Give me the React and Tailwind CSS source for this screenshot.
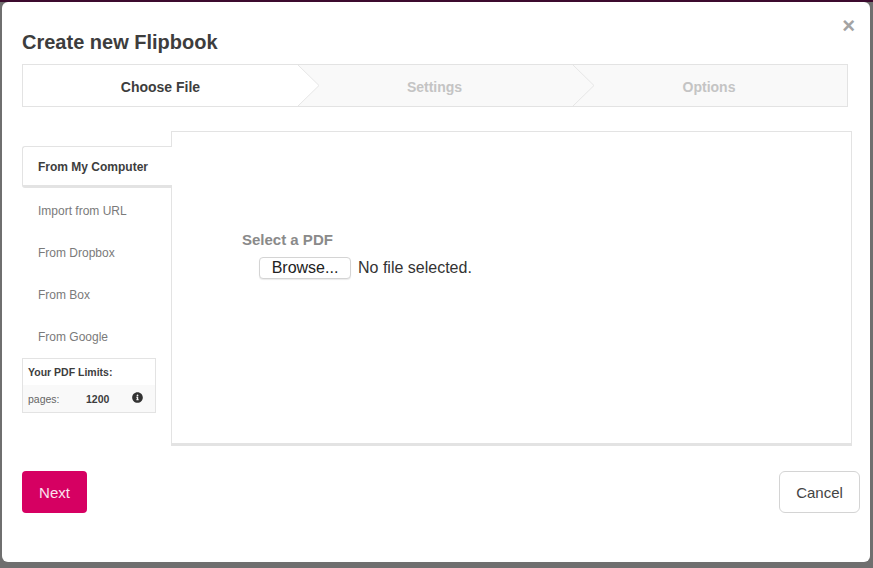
import React from "react";
import { FaInfoCircle } from "react-icons/fa";

const sans = "font-['Liberation_Sans',Arial,sans-serif]";

const Chevron = ({ left }) => (
  <svg className="absolute top-0" style={{ left }} width="22" height="41" viewBox="0 0 22 41">
    <path d="M0 0 L21 20.5 L0 41" fill="none" stroke="#e6e6e6" strokeWidth="1" />
  </svg>
);

const Steps = () => (
  <div className="relative flex h-[43px] w-[826px] border border-[#e3e3e3] bg-[#f9f9f9] text-sm font-bold text-[#c4c4c4]">
    {/* white fill of the first step with its arrow tip */}
    <svg className="absolute left-0 top-0" width="297" height="41" viewBox="0 0 297 41">
      <path d="M0 0 L275 0 L296 20.5 L275 41 L0 41 Z" fill="#fff" />
    </svg>
    <div className="relative flex w-[275px] items-center justify-center pt-[2px] text-[#3d3d3d]">Choose File</div>
    <div className="relative flex w-[275px] items-center justify-center pr-[2px] pt-[2px]">Settings</div>
    <div className="relative flex flex-1 items-center justify-center pr-[2px] pt-[2px]">Options</div>
    <Chevron left={275} />
    <Chevron left={550} />
  </div>
);

const Sidebar = () => (
  <div className="relative z-10 mt-[15px] w-[150px] shrink-0 -mr-px text-xs">
    <div className="flex h-[42px] items-center rounded-l-[3px] border border-b-[3px] border-r-0 border-[#e3e3e3] bg-white pl-[15px] pt-px font-bold text-[#3d3d3d]">
      From My Computer
    </div>
    <div className="flex flex-col text-[#7a7a7a]">
      <div className="flex h-[41px] items-center pl-4 pt-[5px]">Import from URL</div>
      <div className="flex h-[42px] items-center pl-4 pt-[5px]">From Dropbox</div>
      <div className="flex h-[42px] items-center pl-4 pt-[5px]">From Box</div>
      <div className="flex h-[42px] items-center pl-4 pt-[5px]">From Google</div>
    </div>
    <div className="mt-[3px] h-[55px] w-[134px] border border-[#e3e3e3] text-[10.5px] text-[#3d3d3d]">
      <div className="flex h-[26px] items-center pl-[5px] font-bold">Your PDF Limits:</div>
      <div className="flex h-[27px] items-center bg-[#f9f9f9] pl-[5px]">
        <span className="w-[58px] text-[#666]">pages:</span>
        <span className="w-[46px] font-bold">1200</span>
        <FaInfoCircle className="size-[11px] -translate-y-px text-[#333]" />
      </div>
    </div>
  </div>
);

const Panel = () => (
  <div className="h-[315px] w-[681px] border border-b-[3px] border-[#e3e3e3] bg-white pl-[70px] pt-[99px]">
    <div className="text-[15px] font-bold leading-[18px] text-[#8a8a8a]">Select a PDF</div>
    <div className="ml-[17px] mt-[7px] flex items-center text-base text-[#333]">
      <button className="h-[22px] w-[92px] rounded-[4px] border border-[#d4d4d4] bg-white text-base leading-none text-[#222] shadow-[0_1px_1px_rgba(0,0,0,0.08)]">
        Browse...
      </button>
      <span className="ml-[7px]">No file selected.</span>
    </div>
  </div>
);

export default function App() {
  return (
    <div className={`h-[568px] w-[873px] overflow-hidden border-t-2 border-[#3c0a2e] bg-[#6f6f6f] pl-[2px] ${sans}`}>
      <div className="relative h-[560px] w-[868px] rounded-[6px] bg-white pl-[20px] pt-[28px]">
        <button className="absolute right-[15px] top-[13px] text-[22px] font-bold leading-[22px] text-[#a3a3a3]">×</button>
        <h1 className="h-[34px] text-xl font-bold leading-[24px] text-[#3d3d3d]">Create new Flipbook</h1>
        <Steps />
        <div className="mt-[24px] flex items-start">
          <Sidebar />
          <Panel />
        </div>
        <div className="mt-[25px] flex w-[838px] items-start justify-between">
          <button className="h-[42px] w-[65px] rounded-[4px] bg-[#d60062] pt-[2px] text-[15px] text-[#fbe3ef]">Next</button>
          <button className="h-[42px] w-[81px] rounded-[6px] border border-[#d4d4d4] bg-white pt-[2px] text-[15px] text-[#444]">Cancel</button>
        </div>
      </div>
    </div>
  );
}
